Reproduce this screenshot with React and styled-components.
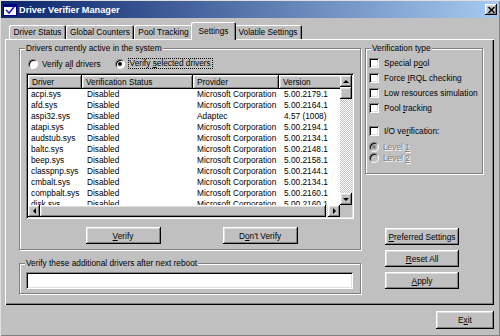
import React from "react";
import styled, { createGlobalStyle, css } from "styled-components";

const GlobalStyle = createGlobalStyle`
  html, body {
    margin: 0;
    padding: 0;
    background: #c0c0c0;
  }
  body {
    font-family: "Liberation Sans", Arial, sans-serif;
    font-size: 8.3px;
    color: #000;
  }
  * {
    box-sizing: border-box;
  }
`;

const raised = css`
  box-shadow: inset -1px -1px #000, inset 1px 1px #fff, inset -2px -2px #808080,
    inset 2px 2px #dfdfdf;
`;

const sunken = css`
  box-shadow: inset 1px 1px #808080, inset -1px -1px #fff, inset 2px 2px #000,
    inset -2px -2px #dfdfdf;
`;

const Window = styled.div`
  width: 500px;
  height: 336px;
  padding: 1px;
  background: #c0c0c0;
  box-shadow: inset 1px 1px #dfdfdf, inset -1px -1px #808080;
  display: flex;
  flex-direction: column;
  overflow: hidden;
`;

const TitleBar = styled.div`
  height: 17px;
  display: flex;
  align-items: center;
  gap: 2px;
  padding: 0 2px;
  background: linear-gradient(to right, #0a246a, #a6caf0);
  color: #fff;
  font-weight: bold;
  font-size: 9.2px;
`;

const TitleText = styled.span`
  flex: 1;
`;

const CloseBox = styled.div`
  width: 12px;
  height: 11px;
  background: #c0c0c0;
  ${raised};
  display: flex;
  align-items: center;
  justify-content: center;
`;

const Body = styled.div`
  padding: 4px 5px 0 4px;
  display: flex;
  flex-direction: column;
`;

const TabStrip = styled.div`
  height: 17px;
  display: flex;
  align-items: flex-end;
  padding-left: 4px;
  position: relative;
  z-index: 2;
`;

const Tab = styled.div`
  width: ${(p) => p.$w + (p.$active ? 4 : 0)}px;
  height: ${(p) => (p.$active ? 18 : 14)}px;
  margin: 0 ${(p) => (p.$active ? -2 : 0)}px ${(p) => (p.$active ? -1 : 0)}px;
  padding-bottom: ${(p) => (p.$active ? 1 : 0)}px;
  background: #c0c0c0;
  border-radius: 2px 2px 0 0;
  box-shadow: inset 1px 1px #fff, inset -1px 0 #000, inset -2px 0 #808080;
  display: flex;
  align-items: center;
  justify-content: center;
  white-space: nowrap;
  position: relative;
  z-index: ${(p) => (p.$active ? 2 : 1)};
`;

const Panel = styled.div`
  width: 489px;
  height: 266px;
  padding: 9px 0 0 14px;
  box-shadow: inset 1px 1px #fff, inset -1px -1px #000, inset -2px -2px #808080;
  display: flex;
  gap: 4px;
`;

const Column = styled.div`
  width: ${(p) => p.$w}px;
  display: flex;
  flex-direction: column;
`;

const GroupBox = styled.div`
  position: relative;
  width: ${(p) => p.$w}px;
  height: ${(p) => p.$h}px;
  margin-top: ${(p) => p.$mt || 0}px;
  border: 1px solid #808080;
  box-shadow: inset 1px 1px #fff, 1px 1px #fff;
  padding: ${(p) => p.$pad};
  display: flex;
  flex-direction: column;
`;

const Caption = styled.span`
  position: absolute;
  top: -6px;
  left: 5px;
  padding: 0 1px;
  line-height: 10px;
  background: #c0c0c0;
  white-space: nowrap;
`;

const RadioRow = styled.div`
  height: 11px;
  display: flex;
  align-items: center;
  gap: 14px;
  padding-left: 2px;
`;

const OptionItem = styled.label`
  display: flex;
  align-items: center;
  gap: ${(p) => p.$gap || 4}px;
  height: ${(p) => p.$h || 11}px;
  margin-top: ${(p) => p.$mt || 0}px;
  white-space: nowrap;
  color: ${(p) => (p.$disabled ? "#808080" : "#000")};
  text-shadow: ${(p) => (p.$disabled ? "1px 1px 0 #fff" : "none")};
`;

const Radio = styled.span`
  width: 10px;
  height: 10px;
  flex: none;
  border-radius: 50%;
  border: 1px solid;
  border-color: #808080 #fff #fff #808080;
  background: ${(p) => (p.$disabled ? "#c0c0c0" : "#fff")};
  box-shadow: inset 1px 1px #000;
  display: flex;
  align-items: center;
  justify-content: center;
  &::after {
    content: "";
    width: 4px;
    height: 4px;
    border-radius: 50%;
    background: ${(p) => (p.$disabled ? "#808080" : "#000")};
    display: ${(p) => (p.$checked ? "block" : "none")};
  }
`;

const Focus = styled.span`
  border: 1px dotted #000;
  padding: 0 1px;
  line-height: 9px;
`;

const CheckBox = styled.span`
  width: 10px;
  height: 10px;
  flex: none;
  background: #fff;
  ${sunken};
`;

const ListBox = styled.div`
  width: 328px;
  height: 146px;
  margin-top: 4px;
  padding: 2px;
  background: #fff;
  ${sunken};
  display: grid;
  grid-template-columns: 312px 12px;
  grid-template-rows: 130px 12px;
`;

const ListContent = styled.div`
  overflow: hidden;
`;

const columns = "54px 111px 86px 80px";

const HeaderRow = styled.div`
  display: grid;
  grid-template-columns: ${columns};
  width: 331px;
`;

const HeaderCell = styled.div`
  height: 14px;
  padding-left: 4px;
  line-height: 14px;
  background: #c0c0c0;
  ${raised};
  white-space: nowrap;
`;

const Row = styled.div`
  display: grid;
  grid-template-columns: ${columns};
  width: 331px;
  height: 11px;
  line-height: 11px;
`;

const Cell = styled.div`
  padding-left: ${(p) => p.$pl || 4}px;
  white-space: nowrap;
  overflow: hidden;
`;

const VScroll = styled.div`
  display: flex;
  flex-direction: column;
  background: repeating-conic-gradient(#fff 0 25%, #c0c0c0 0 50%) 0 0 / 2px 2px;
`;

const HScroll = styled.div`
  display: flex;
  background: repeating-conic-gradient(#fff 0 25%, #c0c0c0 0 50%) 0 0 / 2px 2px;
`;

const ScrollButton = styled.div`
  width: 12px;
  height: 12px;
  flex: none;
  background: #c0c0c0;
  ${raised};
  display: flex;
  align-items: center;
  justify-content: center;
`;

const Thumb = styled.div`
  background: #c0c0c0;
  ${raised};
  ${(p) => (p.$horizontal ? "height: 12px; flex: 1; margin-right: 2px;" : "height: 12px;")}
`;

const Spacer = styled.div`
  flex: 1;
`;

const Corner = styled.div`
  background: #c0c0c0;
`;

const Arrow = styled.span`
  width: 0;
  height: 0;
  ${(p) =>
    p.$dir === "up"
      ? "border-left: 3px solid transparent; border-right: 3px solid transparent; border-bottom: 3px solid #000;"
      : p.$dir === "down"
      ? "border-left: 3px solid transparent; border-right: 3px solid transparent; border-top: 3px solid #000;"
      : p.$dir === "left"
      ? "border-top: 3px solid transparent; border-bottom: 3px solid transparent; border-right: 3px solid #000;"
      : "border-top: 3px solid transparent; border-bottom: 3px solid transparent; border-left: 3px solid #000;"}
`;

const ButtonRow = styled.div`
  display: flex;
  justify-content: center;
  gap: 62px;
  margin-top: 8px;
  padding-right: 3px;
`;

const Button = styled.div`
  width: ${(p) => p.$w || 75}px;
  height: ${(p) => p.$h || 17}px;
  background: #c0c0c0;
  ${raised};
  display: flex;
  align-items: center;
  justify-content: center;
  white-space: nowrap;
`;

const TextInput = styled.div`
  width: 327px;
  height: 17px;
  background: #fff;
  ${sunken};
`;

const RightButtons = styled.div`
  display: flex;
  flex-direction: column;
  gap: 5px;
  margin-top: 54px;
  padding-left: 20px;
`;

const Footer = styled.div`
  display: flex;
  justify-content: flex-end;
  margin-top: 6px;
`;

const drivers = [
  ["acpi.sys", "Microsoft Corporation", "5.00.2179.1"],
  ["afd.sys", "Microsoft Corporation", "5.00.2164.1"],
  ["aspi32.sys", "Adaptec", "4.57 (1008)"],
  ["atapi.sys", "Microsoft Corporation", "5.00.2194.1"],
  ["audstub.sys", "Microsoft Corporation", "5.00.2134.1"],
  ["baltc.sys", "Microsoft Corporation", "5.00.2148.1"],
  ["beep.sys", "Microsoft Corporation", "5.00.2158.1"],
  ["classpnp.sys", "Microsoft Corporation", "5.00.2144.1"],
  ["cmbalt.sys", "Microsoft Corporation", "5.00.2134.1"],
  ["compbalt.sys", "Microsoft Corporation", "5.00.2160.1"],
  ["disk.sys", "Microsoft Corporation", "5.00.2160.1"],
];

const tabs = [
  ["Driver Status", 57],
  ["Global Counters", 68],
  ["Pool Tracking", 59],
  ["Settings", 41],
  ["Volatile Settings", 68],
];

const AppIcon = () => (
  <svg width="14" height="12" viewBox="0 0 14 12">
    <rect x="0.5" y="0.5" width="13" height="11" fill="#fff" stroke="#000080" />
    <rect x="1" y="1" width="12" height="2" fill="#000080" />
    <path d="M3 6 L6 9 L11 3" stroke="#2020c0" strokeWidth="1.6" fill="none" />
  </svg>
);

const CloseIcon = () => (
  <svg width="7" height="6" viewBox="0 0 7 6">
    <path d="M0.5 0 L6.5 6 M6.5 0 L0.5 6" stroke="#000" strokeWidth="1.4" />
  </svg>
);

const App = () => {
  return (
    <Window>
      <GlobalStyle />
      <TitleBar>
        <AppIcon />
        <TitleText>Driver Verifier Manager</TitleText>
        <CloseBox>
          <CloseIcon />
        </CloseBox>
      </TitleBar>
      <Body>
        <TabStrip>
          {tabs.map(([name, w]) => (
            <Tab key={name} $w={w} $active={name === "Settings"}>
              {name}
            </Tab>
          ))}
        </TabStrip>
        <Panel>
          <Column $w={342}>
            <GroupBox $w={342} $h={202} $pad="9px 0 0 6px">
              <Caption>Drivers currently active in the system</Caption>
              <RadioRow>
                <OptionItem>
                  <Radio />
                  <span>
                    Verify a<u>l</u>l drivers
                  </span>
                </OptionItem>
                <OptionItem $gap={3}>
                  <Radio $checked />
                  <Focus>
                    Verify <u>s</u>elected drivers
                  </Focus>
                </OptionItem>
              </RadioRow>
              <ListBox>
                <ListContent>
                  <HeaderRow>
                    <HeaderCell>Driver</HeaderCell>
                    <HeaderCell>Verification Status</HeaderCell>
                    <HeaderCell>Provider</HeaderCell>
                    <HeaderCell>Version</HeaderCell>
                  </HeaderRow>
                  {drivers.map(([name, provider, version]) => (
                    <Row key={name}>
                      <Cell $pl={3}>{name}</Cell>
                      <Cell $pl={5}>Disabled</Cell>
                      <Cell>{provider}</Cell>
                      <Cell $pl={5}>{version}</Cell>
                    </Row>
                  ))}
                </ListContent>
                <VScroll>
                  <ScrollButton>
                    <Arrow $dir="up" />
                  </ScrollButton>
                  <Thumb />
                  <Spacer />
                  <ScrollButton>
                    <Arrow $dir="down" />
                  </ScrollButton>
                </VScroll>
                <HScroll>
                  <ScrollButton>
                    <Arrow $dir="left" />
                  </ScrollButton>
                  <Thumb $horizontal />
                  <ScrollButton>
                    <Arrow $dir="right" />
                  </ScrollButton>
                </HScroll>
                <Corner />
              </ListBox>
              <ButtonRow>
                <Button>
                  <span>
                    <u>V</u>erify
                  </span>
                </Button>
                <Button>
                  <span>
                    D<u>o</u>n't Verify
                  </span>
                </Button>
              </ButtonRow>
            </GroupBox>
            <GroupBox $w={342} $h={31} $mt={13} $pad="8px 0 0 6px">
              <Caption>Verify these additional drivers after next reboot</Caption>
              <TextInput />
            </GroupBox>
          </Column>
          <Column $w={118}>
            <GroupBox $w={118} $h={126} $pad="9px 0 0 3px">
              <Caption>Verification type</Caption>
              <OptionItem $h={10} $gap={5}>
                <CheckBox />
                <span>
                  Special p<u>o</u>ol
                </span>
              </OptionItem>
              <OptionItem $h={10} $gap={5} $mt={5}>
                <CheckBox />
                <span>
                  Force <u>I</u>RQL checking
                </span>
              </OptionItem>
              <OptionItem $h={10} $gap={5} $mt={5}>
                <CheckBox />
                <span>Low resources simulation</span>
              </OptionItem>
              <OptionItem $h={10} $gap={5} $mt={5}>
                <CheckBox />
                <span>
                  Pool <u>t</u>racking
                </span>
              </OptionItem>
              <OptionItem $h={10} $gap={5} $mt={13}>
                <CheckBox />
                <span>
                  I/O ve<u>r</u>ification:
                </span>
              </OptionItem>
              <OptionItem $disabled $mt={5}>
                <Radio $checked $disabled />
                <span>
                  Level <u>1</u>
                </span>
              </OptionItem>
              <OptionItem $disabled>
                <Radio $disabled />
                <span>
                  Level <u>2</u>
                </span>
              </OptionItem>
            </GroupBox>
            <RightButtons>
              <Button $w={74}>
                <span>
                  <u>P</u>referred Settings
                </span>
              </Button>
              <Button $w={74}>
                <span>
                  <u>R</u>eset All
                </span>
              </Button>
              <Button $w={74}>
                <span>
                  <u>A</u>pply
                </span>
              </Button>
            </RightButtons>
          </Column>
        </Panel>
        <Footer>
          <Button $w={58} $h={18}>
            <span>
              E<u>x</u>it
            </span>
          </Button>
        </Footer>
      </Body>
    </Window>
  );
};

export default App;
